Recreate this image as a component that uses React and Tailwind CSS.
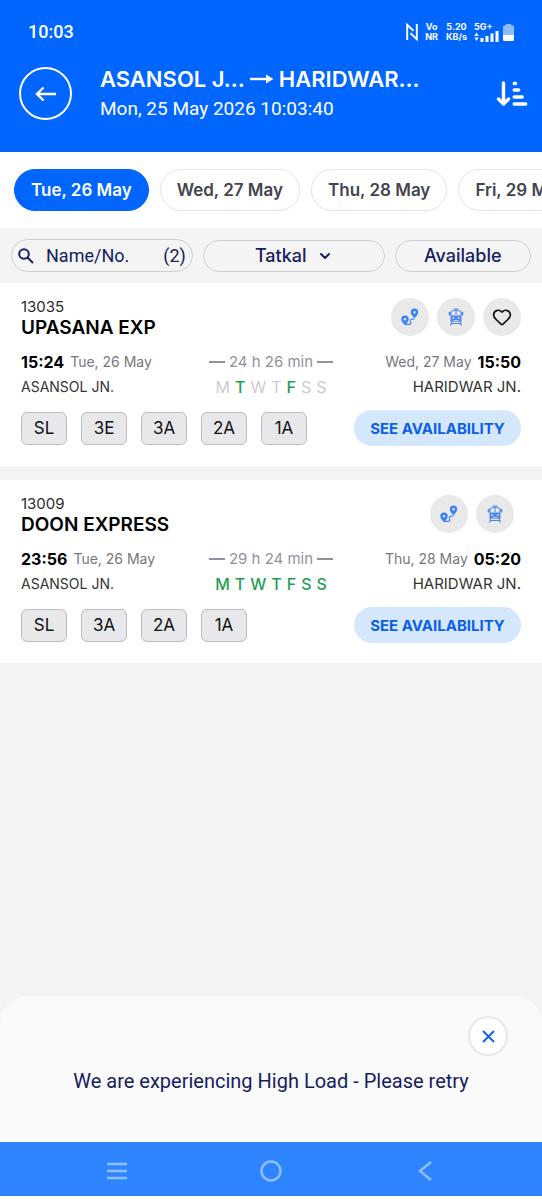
import React, { useState } from 'react';
import { ChevronDown, Heart } from 'lucide-react';

const dates = ['Tue, 26 May', 'Wed, 27 May', 'Thu, 28 May', 'Fri, 29 May'];

const weekDays = ['M', 'T', 'W', 'T', 'F', 'S', 'S'];

const trains = [
  {
    number: '13035',
    name: 'UPASANA EXP',
    depart: '15:24',
    departDate: 'Tue, 26 May',
    arrive: '15:50',
    arriveDate: 'Wed, 27 May',
    duration: '24 h 26 min',
    runsOn: [1, 4],
    classes: ['SL', '3E', '3A', '2A', '1A'],
    canLike: true,
  },
  {
    number: '13009',
    name: 'DOON EXPRESS',
    depart: '23:56',
    departDate: 'Tue, 26 May',
    arrive: '05:20',
    arriveDate: 'Thu, 28 May',
    duration: '29 h 24 min',
    runsOn: [0, 1, 2, 3, 4, 5, 6],
    classes: ['SL', '3A', '2A', '1A'],
    canLike: false,
  },
];

const RouteIcon = () => (
  <svg width="18" height="18" viewBox="0 0 18 18" fill="none">
    <path d="M4 16.400h4.200c1.600 0 2-1.200 1.400-2.400-.7-1.500-.4-2.600 1.200-2.800l2.700-.4" stroke="#3b82f6" strokeWidth="1.200" />
    <path fillRule="evenodd" fill="#3b82f6" d="M4 7.500A3.700 3.700 0 0 0 .3 11.200C.3 14 4 17 4 17s3.700-3 3.700-5.800A3.700 3.700 0 0 0 4 7.500zm0 2.500a1.200 1.200 0 1 1 0 2.400 1.200 1.200 0 0 1 0-2.400z" />
    <path fillRule="evenodd" fill="#3b82f6" d="M13.500.5a3.700 3.700 0 0 0-3.700 3.700c0 2.800 3.700 5.800 3.700 5.800s3.700-3 3.700-5.800A3.700 3.700 0 0 0 13.500.5zm0 2.500a1.200 1.200 0 1 1 0 2.400 1.200 1.200 0 0 1 0-2.400z" />
  </svg>
);

const TrainIcon = () => (
  <svg width="16" height="18" viewBox="0 0 16 18" fill="none" stroke="#4a86ea">
    <path d="M5.500 1h5M8 1v6" />
    <path d="M3 7.500V4c0-1 1-1.500 5-1.500s5 .5 5 1.500v3.500" strokeWidth="1.200" />
    <path d="M1.500 4v3.500M14.500 4v3.500" strokeWidth="1.500" />
    <path fill="#4a86ea" fillRule="evenodd" stroke="none" d="M2.500 7.500h11v6.300h-11zM4.200 9.500v1.300h2V9.500zm5.600 0v1.300h2V9.500zM5.500 12v.8h5V12z" />
    <path d="M3.800 14l-1.300 3.500M12.200 14l1.300 3.500M3.500 15.500h9" strokeWidth="1.200" />
  </svg>
);

const SearchIcon = () => (
  <svg width="16" height="16" viewBox="0 0 16 16" fill="none" stroke="#16205e" strokeWidth="2" className="shrink-0">
    <circle cx="6" cy="6" r="4.800" />
    <path d="M9.500 9.500l5.500 5.500" />
  </svg>
);

const SortIcon = () => (
  <svg width="32" height="26" viewBox="0 0 32 26" fill="none" stroke="white" strokeWidth="3.400" strokeLinecap="round" strokeLinejoin="round">
    <path d="M7.500 2v21M2.500 18l5 5 5-5" />
    <path d="M18.200 2.500h1.300M18.200 9h4.500M18.200 16h8M18.200 23h11.500" />
  </svg>
);

const StatusBar = () => (
  <div className="flex items-center justify-between px-7 h-16">
    <span className="font-['Roboto',sans-serif] text-[18px] leading-6 font-medium">10:03</span>
    <div className="flex items-center font-['Inter',sans-serif] text-[9px] leading-[10px] font-bold text-center">
      <svg width="12" height="18" viewBox="0 0 12 18" fill="none" stroke="white" strokeWidth="1.900" className="mr-[7px]">
        <path d="M1.200 17V1.800l6.300 6M10.800 1v15.200l-6.300-6" />
      </svg>
      <div className="mr-2"><div>Vo</div><div>NR</div></div>
      <div className="mr-[7px]"><div>5.20</div><div>KB/s</div></div>
      <div className="mr-1 text-left">
        <div className="leading-2">5G+</div>
        <svg width="25" height="11" viewBox="0 0 25 11" fill="white" className="block">
          <path d="M2.500 1.500L4.700 5H.3zM2.500 10L.3 6.500h4.400z" />
          <rect x="6.500" y="7" width="3" height="4" />
          <rect x="11.500" y="5" width="3" height="6" />
          <rect x="16.500" y="2.500" width="3" height="8.500" />
          <rect x="21.500" y="0" width="3" height="11" />
        </svg>
      </div>
      <svg width="11" height="17" viewBox="0 0 11 17">
        <path d="M3 0h5v1.200h1.500A1.500 1.500 0 0 1 11 2.700V11H0V2.700a1.500 1.500 0 0 1 1.500-1.500H3z" fill="#8dbcff" />
        <path d="M0 11h11v4.500A1.500 1.500 0 0 1 9.500 17h-8A1.500 1.500 0 0 1 0 15.500z" fill="white" />
      </svg>
    </div>
  </div>
);

const roundButton = 'flex items-center justify-center size-[38px] rounded-full bg-[#e9e9ea]';

const TrainCard = ({ train }) => (
  <article className="bg-white px-[21px] pt-[15px] pb-5">
    <div className="flex justify-between">
      <div>
        <div className="text-[15px] leading-[18px] text-[#2b2b2b]">{train.number}</div>
        <h2 className="text-[19px] leading-6 font-semibold text-black">{train.name}</h2>
      </div>
      <div className={train.canLike ? 'flex gap-2' : 'flex gap-2 pr-[7px]'}>
        <button className={roundButton} aria-label="Route"><RouteIcon /></button>
        <button className={roundButton} aria-label="Live train status"><TrainIcon /></button>
        {train.canLike && (
          <button className={roundButton} aria-label="Add to favourites"><Heart size={20} color="#111111" /></button>
        )}
      </div>
    </div>

    <div className="grid grid-cols-[1fr_auto_1fr] mt-2.5 whitespace-nowrap">
      <div>
        <div className="flex items-center gap-1.5 h-6">
          <span className="text-base font-bold text-black">{train.depart}</span>
          <span className="text-sm text-[#77777b]">{train.departDate}</span>
        </div>
        <div className="text-sm leading-[26px] text-[#333333]">ASANSOL JN.</div>
      </div>
      <div className="flex flex-col items-center">
        <div className="flex items-center gap-1 h-6 text-[15px] text-[#92929d]">
          <span className="w-4 h-0.5 bg-[#92929d]" />
          {train.duration}
          <span className="w-4 h-0.5 bg-[#92929d]" />
        </div>
        <div className="flex gap-[5px] text-base leading-[26px]">
          {weekDays.map((day, i) => (
            <span key={i} className={train.runsOn.includes(i) ? 'text-[#1f9d55] font-medium' : 'text-[#cccccf]'}>{day}</span>
          ))}
        </div>
      </div>
      <div className="text-right">
        <div className="flex items-center justify-end gap-1.5 h-6">
          <span className="text-sm text-[#77777b]">{train.arriveDate}</span>
          <span className="text-base font-bold text-black">{train.arrive}</span>
        </div>
        <div className="text-[15px] leading-[26px] text-[#333333]">HARIDWAR JN.</div>
      </div>
    </div>

    <div className="flex items-center justify-between mt-2.5">
      <div className="flex gap-3.5">
        {train.classes.map((cls) => (
          <button key={cls} className="w-[46px] h-[33px] pt-0.5 rounded-md border border-[#bdbdc0] bg-[#e8e8ea] text-[17px] text-[#111111]">{cls}</button>
        ))}
      </div>
      <button className="h-9 w-[167px] pt-0.5 rounded-full bg-[#d5e7fd] text-[15px] font-bold text-[#0b5fe6] whitespace-nowrap">SEE AVAILABILITY</button>
    </div>
  </article>
);

const App = () => {
  const [selectedDate, setSelectedDate] = useState(0);
  const [search, setSearch] = useState('');
  const [quota, setQuota] = useState('Tatkal');

  return (
    <div className="min-h-screen flex flex-col bg-[#f4f4f4] font-['Inter',sans-serif] overflow-x-hidden">
      {/* Header */}
      <header className="bg-[#0066ff] text-white">
        <StatusBar />
        <div className="flex items-start pl-[19px] pr-3.5 h-[88px]">
          <button aria-label="Back" className="flex items-center justify-center size-[53px] mt-[3px] rounded-full border-2 border-white shrink-0">
            <svg width="22" height="16" viewBox="0 0 22 16" fill="none" stroke="white" strokeWidth="2.400">
              <path d="M21 8H2M8.500 1.500L2 8l6.500 6.500" />
            </svg>
          </button>
          <div className="flex-1 ml-7">
            <h1 className="flex items-center text-[22px] leading-[30px] font-semibold whitespace-nowrap">
              ASANSOL J...
              <svg width="24" height="12" viewBox="0 0 24 12" className="mx-[5px]">
                <path d="M0 6h18" stroke="white" strokeWidth="2.400" />
                <path d="M16 1.500L23.500 6 16 10.500z" fill="white" />
              </svg>
              HARIDWAR...
            </h1>
            <p className="font-['Roboto',sans-serif] text-[19px] leading-[30px]">Mon, 25 May 2026 10:03:40</p>
          </div>
          <button aria-label="Sort trains" className="mt-[17px] shrink-0"><SortIcon /></button>
        </div>
      </header>

      {/* Date strip */}
      <nav className="flex gap-[11px] h-[76px] items-center pl-3.5 bg-white overflow-hidden">
        {dates.map((date, i) => (
          <button
            key={date}
            onClick={() => setSelectedDate(i)}
            className={`h-[42px] px-4 pt-0.5 shrink-0 rounded-full border text-[17px] font-semibold ${selectedDate === i ? 'bg-[#0066ff] border-[#0066ff] text-white' : 'bg-white border-[#e4e4e6] text-[#44444f]'}`}
          >
            {date}
          </button>
        ))}
      </nav>

      {/* Filters */}
      <div className="grid grid-cols-[4fr_4fr_3fr] items-center gap-2.5 px-[11px] h-[55px] text-[18px] text-[#16205e]">
        <div className="flex items-center min-w-0 h-[33px] px-1.5 rounded-full border border-[#cfcfd2] font-['Roboto',sans-serif]">
          <SearchIcon />
          <input
            aria-label="Train name or number"
            placeholder="Name/No."
            value={search}
            onChange={(e) => setSearch(e.target.value)}
            className="flex-1 min-w-0 ml-3 bg-transparent outline-none placeholder:text-[#16205e]"
          />
          <span>(2)</span>
        </div>
        <div className="flex items-center justify-center gap-2.5 h-8 rounded-full border border-[#cfcfd2]">
          <select
            aria-label="Quota"
            value={quota}
            onChange={(e) => setQuota(e.target.value)}
            className="appearance-none bg-transparent font-medium field-sizing-content outline-none"
          >
            <option>Tatkal</option>
            <option>General</option>
            <option>Ladies</option>
          </select>
          <ChevronDown size={16} strokeWidth={3} />
        </div>
        <button className="h-8 rounded-full border border-[#cfcfd2] font-medium">Available</button>
      </div>

      {/* Train list */}
      <main className="flex flex-1 flex-col gap-3.5">
        {trains.map((train) => <TrainCard key={train.number} train={train} />)}
      </main>

      {/* Bottom message */}
      <section role="alert" className="flex flex-col rounded-t-[28px] bg-[#fafafa] pt-5 pb-[46px]">
        <button aria-label="Close" className="flex items-center justify-center self-end mr-[34px] size-10 rounded-full border-2 border-[#e8e8ea] bg-white">
          <svg width="13" height="13" viewBox="0 0 13 13" stroke="#0b63ee" strokeWidth="1.800">
            <path d="M1 1l11 11M12 1L1 12" />
          </svg>
        </button>
        <p className="mt-2.5 text-center font-['Roboto',sans-serif] text-xl leading-[30px] text-[#16205e]">
          We are experiencing High Load - Please retry
        </p>
      </section>

      {/* System navigation */}
      <footer className="grid grid-cols-3 place-items-center px-10 pt-1 h-[54px] bg-[#2f84ff]">
        <button aria-label="Recent apps">
          <svg width="22" height="18" viewBox="0 0 22 18" stroke="#8fbfff" strokeWidth="2.400">
            <path d="M1 2h20M1 9h20M1 16h20" />
          </svg>
        </button>
        <button aria-label="Home">
          <svg width="22" height="22" viewBox="0 0 22 22" fill="none" stroke="#8fbfff" strokeWidth="2.400">
            <circle cx="11" cy="11" r="9.500" />
          </svg>
        </button>
        <button aria-label="Go back">
          <svg width="14" height="20" viewBox="0 0 14 20" fill="none" stroke="#8fbfff" strokeWidth="2.400">
            <path d="M13 1L2 10l11 9" />
          </svg>
        </button>
      </footer>
      <div className="h-1 bg-white" />
    </div>
  );
};

export default App;
